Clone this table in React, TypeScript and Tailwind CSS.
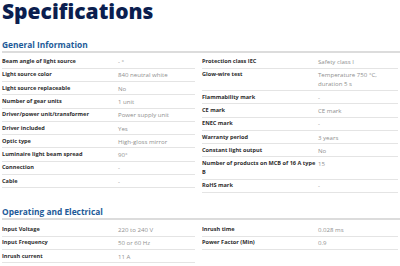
type Row = [string, string];

const generalLeft: Row[] = [
  ["Beam angle of light source", "- °"],
  ["Light source color", "840 neutral white"],
  ["Light source replaceable", "No"],
  ["Number of gear units", "1 unit"],
  ["Driver/power unit/transformer", "Power supply unit"],
  ["Driver included", "Yes"],
  ["Optic type", "High-gloss mirror"],
  ["Luminaire light beam spread", "90°"],
  ["Connection", "-"],
  ["Cable", "-"],
];

const generalRight: Row[] = [
  ["Protection class IEC", "Safety class I"],
  ["Glow-wire test", "Temperature 750 °C, duration 5 s"],
  ["Flammability mark", "-"],
  ["CE mark", "CE mark"],
  ["ENEC mark", "-"],
  ["Warranty period", "3 years"],
  ["Constant light output", "No"],
  ["Number of products on MCB of 16 A type B", "15"],
  ["RoHS mark", "-"],
];

const electricalLeft: Row[] = [
  ["Input Voltage", "220 to 240 V"],
  ["Input Frequency", "50 or 60 Hz"],
  ["Inrush current", "11 A"],
];

const electricalRight: Row[] = [
  ["Inrush time", "0.028 ms"],
  ["Power Factor (Min)", "0.9"],
];

function SpecColumn({ rows }: { rows: Row[] }) {
  return (
    <div className="flex flex-col pt-[3px]">
      {rows.map(([label, value]) => (
        <div key={label} className="flex border-b border-[#e4e4e4] py-[1.65px] leading-[9px]">
          <div className="w-[116px] shrink-0 text-[5.6px] font-bold text-[#2d2d2d]">{label}</div>
          <div className="w-[68px] text-[6.1px] text-[#8f8f8f]">{value}</div>
        </div>
      ))}
    </div>
  );
}

function Section({ title, left, right, className }: { title: string; left: Row[]; right: Row[]; className: string }) {
  return (
    <section className={className}>
      <h2 className="text-[8.4px] font-bold leading-[12px] text-[#1d5a98]">{title}</h2>
      <div className="-mr-[2px] h-[2px] bg-[#dcdcdc]" />
      <div className="grid grid-cols-[193px_196px] gap-x-[7px]">
        <SpecColumn rows={left} />
        <SpecColumn rows={right} />
      </div>
    </section>
  );
}

export default function App() {
  return (
    <div
      className="h-[266px] w-[400px] overflow-hidden bg-white pl-[2px]"
      style={{ fontFamily: '"Open Sans", "Noto Sans", sans-serif' }}
    >
      <h1 className="text-[21px] font-extrabold leading-[22px] text-[#0b1e4f]">Specifications</h1>
      <Section title="General Information" left={generalLeft} right={generalRight} className="mt-[16.5px]" />
      <Section title="Operating and Electrical" left={electricalLeft} right={electricalRight} className="mt-[13.4px]" />
    </div>
  );
}
